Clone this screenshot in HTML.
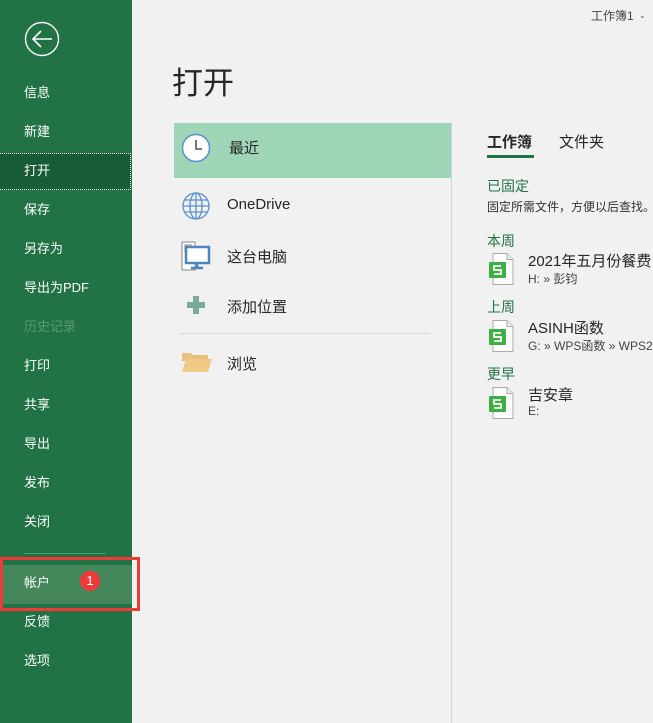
<!DOCTYPE html>
<html><head><meta charset="utf-8"><style>
*{margin:0;padding:0;box-sizing:border-box}
body{width:653px;height:723px;overflow:hidden;background:#f1f1f1;font-family:"Liberation Sans","Noto Sans CJK SC",sans-serif;position:relative}
.side{position:absolute;left:0;top:0;width:132px;height:723px;background:#217346}
.it{position:absolute;left:24px;color:#fff;font-size:13px;line-height:16px;transform:translateY(-8px)}
.abs{position:absolute;white-space:nowrap}
.t{font-size:15px;color:#262626}
.g{color:#217346;font-size:14px}
</style></head><body>
<div class="side">
<svg class="abs" style="left:24px;top:21px" width="36" height="36"><circle cx="18" cy="18" r="16.5" fill="none" stroke="#fff" stroke-width="1.4"/><path d="M9 18H28M17 10L9 18L17 26" fill="none" stroke="#fff" stroke-width="1.6"/></svg>
<div class="it" style="top:93px">信息</div>
<div class="it" style="top:132px">新建</div>
<div class="abs" style="left:0;top:153px;width:131px;height:37px;background:#185c37;border:1px dotted #fff;border-left:none"></div>
<div class="it" style="top:171px">打开</div>
<div class="it" style="top:210px">保存</div>
<div class="it" style="top:249px">另存为</div>
<div class="it" style="top:288px">导出为PDF</div>
<div class="it" style="top:327px;color:#5a9a72">历史记录</div>
<div class="it" style="top:366px">打印</div>
<div class="it" style="top:405px">共享</div>
<div class="it" style="top:444px">导出</div>
<div class="it" style="top:483px">发布</div>
<div class="it" style="top:522px">关闭</div>
<div class="abs" style="left:24px;top:553px;width:82px;height:1px;background:#4f9a6e"></div>
<div class="abs" style="left:0;top:565px;width:132px;height:39px;background:#43875b"></div>
<div class="it" style="top:583px">帐户</div>
<div class="abs" style="left:80px;top:571px;width:20px;height:20px;border-radius:50%;background:#f03a3a;color:#fff;font-size:13px;text-align:center;line-height:20px">1</div>
<div class="it" style="top:622px">反馈</div>
<div class="it" style="top:661px">选项</div>
</div>
<div class="abs" style="left:0;top:557px;width:140px;height:54px;border:3px solid #f03a3a"></div>
<div class="abs" style="left:591px;top:7px;font-size:12px;color:#444">工作簿1 &nbsp;-</div>
<div class="abs" style="left:172px;top:64px;font-size:31px;color:#262626;line-height:40px">打开</div>
<div class="abs" style="left:174px;top:123px;width:277px;height:55px;background:#9fd5b7"></div>
<svg class="abs" style="left:181px;top:133px" width="30" height="30"><circle cx="15" cy="15" r="13.5" fill="#fff" stroke="#5b8fd0" stroke-width="1.5"/><path d="M15 7V16H21" fill="none" stroke="#555" stroke-width="1.6"/></svg>
<div class="abs t" style="left:229px;top:137px">最近</div>
<svg class="abs" style="left:181px;top:191px" width="30" height="30" fill="none" stroke="#5b8fd0" stroke-width="1.3"><circle cx="15" cy="15" r="13"/><ellipse cx="15" cy="15" rx="6" ry="13"/><path d="M15 2V28M2 15H28M4 9H26M4 21H26"/></svg>
<div class="abs t" style="left:227px;top:196px">OneDrive</div>
<svg class="abs" style="left:181px;top:241px" width="32" height="30"><path d="M1 1H14V29H1Z" fill="#fff" stroke="#888"/><path d="M3 4H11M3 7H11M3 10H7" stroke="#888"/><rect x="5" y="6" width="23" height="16" fill="#fff" stroke="#4f84c4" stroke-width="2.5"/><path d="M16 22V26M10 27H22" stroke="#4f84c4" stroke-width="2.5"/></svg>
<div class="abs t" style="left:227px;top:246px">这台电脑</div>
<svg class="abs" style="left:187px;top:296px" width="18" height="18"><path d="M6 0H12V6H18V12H12V18H6V12H0V6H6Z" fill="#7aab9a"/></svg>
<div class="abs t" style="left:227px;top:296px">添加位置</div>
<div class="abs" style="left:180px;top:333px;width:251px;height:1px;background:#d8d8d8"></div>
<svg class="abs" style="left:181px;top:351px" width="32" height="22"><path d="M1 2H10L12 4H27V10H1Z" fill="#e8c07c"/><path d="M1 21L5 8H31L27 21Z" fill="#f0c888"/></svg>
<div class="abs t" style="left:227px;top:353px">浏览</div>
<div class="abs" style="left:451px;top:123px;width:1px;height:600px;background:#d4d4d4"></div>
<div class="abs" style="left:487px;top:131px;font-size:15px;font-weight:bold;color:#262626">工作簿</div>
<div class="abs" style="left:487px;top:155px;width:47px;height:3px;background:#217346"></div>
<div class="abs" style="left:559px;top:131px;font-size:15px;color:#262626">文件夹</div>
<div class="abs g" style="left:487px;top:176px">已固定</div>
<div class="abs" style="left:487px;top:198px;font-size:12px;color:#333">固定所需文件，方便以后查找。</div>
<div class="abs g" style="left:487px;top:231px">本周</div>
<div class="abs g" style="left:487px;top:297px">上周</div>
<div class="abs g" style="left:487px;top:364px">更早</div>
<svg width="0" height="0" style="position:absolute"><defs><g id="f"><path d="M4 0.5H18L24 6.5V31.5H4Z" fill="#fff" stroke="#aaa"/><path d="M18 0.5V6.5H24" fill="#eee" stroke="#aaa"/><rect x="0" y="9" width="17" height="16" rx="1" fill="#3cb043"/><path d="M12 13H5V17H12V21H5" fill="none" stroke="#fff" stroke-width="1.8"/></g></defs></svg>
<svg class="abs" style="left:489px;top:253px" width="26" height="33"><use href="#f"/></svg>
<svg class="abs" style="left:489px;top:320px" width="26" height="33"><use href="#f"/></svg>
<svg class="abs" style="left:489px;top:387px" width="26" height="33"><use href="#f"/></svg>
<div class="abs t" style="left:528px;top:250px">2021年五月份餐费</div>
<div class="abs" style="left:528px;top:270px;font-size:12px;color:#444">H: » 彭钧</div>
<div class="abs t" style="left:528px;top:317px">ASINH函数</div>
<div class="abs" style="left:528px;top:337px;font-size:12px;color:#444">G: » WPS函数 » WPS2</div>
<div class="abs t" style="left:528px;top:384px">吉安章</div>
<div class="abs" style="left:528px;top:404px;font-size:12px;color:#444">E:</div>
</body></html>
